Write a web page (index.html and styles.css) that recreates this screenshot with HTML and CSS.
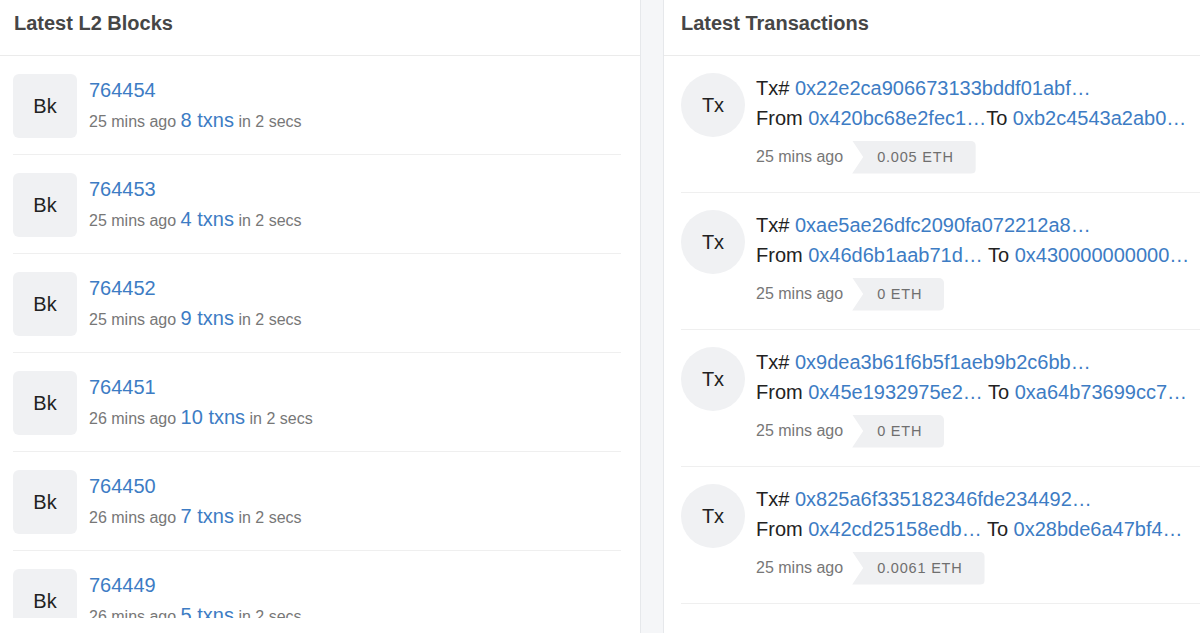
FILE: index.html
```html
<!DOCTYPE html>
<html lang="en">
<head>
    <meta charset="UTF-8">
    <meta name="viewport" content="width=device-width, initial-scale=1.0">
    <title>Explorer - Latest Blocks and Transactions</title>
    <link rel="stylesheet" href="styles.css">
</head>
<body>
    <div class="page">
        <div class="card blocks">
            <div class="card-header">Latest L2 Blocks</div>
            <div class="block-list">
                <div class="block-row">
                    <div class="block-icon">Bk</div>
                    <div class="block-info">
                        <a class="link num" href="#">764454</a>
                        <div class="meta">25 mins ago <a class="link txns" href="#">8 txns</a> in 2 secs</div>
                    </div>
                </div>
                <div class="block-row">
                    <div class="block-icon">Bk</div>
                    <div class="block-info">
                        <a class="link num" href="#">764453</a>
                        <div class="meta">25 mins ago <a class="link txns" href="#">4 txns</a> in 2 secs</div>
                    </div>
                </div>
                <div class="block-row">
                    <div class="block-icon">Bk</div>
                    <div class="block-info">
                        <a class="link num" href="#">764452</a>
                        <div class="meta">25 mins ago <a class="link txns" href="#">9 txns</a> in 2 secs</div>
                    </div>
                </div>
                <div class="block-row">
                    <div class="block-icon">Bk</div>
                    <div class="block-info">
                        <a class="link num" href="#">764451</a>
                        <div class="meta">26 mins ago <a class="link txns" href="#">10 txns</a> in 2 secs</div>
                    </div>
                </div>
                <div class="block-row">
                    <div class="block-icon">Bk</div>
                    <div class="block-info">
                        <a class="link num" href="#">764450</a>
                        <div class="meta">26 mins ago <a class="link txns" href="#">7 txns</a> in 2 secs</div>
                    </div>
                </div>
                <div class="block-row">
                    <div class="block-icon">Bk</div>
                    <div class="block-info">
                        <a class="link num" href="#">764449</a>
                        <div class="meta">26 mins ago <a class="link txns" href="#">5 txns</a> in 2 secs</div>
                    </div>
                </div>
            </div>
        </div>

        <div class="gutter"></div>

        <div class="card txs">
            <div class="card-header">Latest Transactions</div>
            <div class="tx-list">
                <div class="tx-row">
                    <div class="tx-icon">Tx</div>
                    <div class="tx-info">
                        <div class="line">Tx# <a class="link" href="#">0x22e2ca906673133bddf01abf…</a></div>
                        <div class="line">From <a class="link" href="#">0x420bc68e2fec1…</a>To <a class="link" href="#">0xb2c4543a2ab0…</a></div>
                        <div class="tx-meta">
                            <span class="age">25 mins ago</span>
                            <span class="value">0.005 ETH</span>
                        </div>
                    </div>
                </div>
                <div class="tx-row">
                    <div class="tx-icon">Tx</div>
                    <div class="tx-info">
                        <div class="line">Tx# <a class="link" href="#">0xae5ae26dfc2090fa072212a8…</a></div>
                        <div class="line">From <a class="link" href="#">0x46d6b1aab71d…</a> To <a class="link" href="#">0x430000000000…</a></div>
                        <div class="tx-meta">
                            <span class="age">25 mins ago</span>
                            <span class="value">0 ETH</span>
                        </div>
                    </div>
                </div>
                <div class="tx-row">
                    <div class="tx-icon">Tx</div>
                    <div class="tx-info">
                        <div class="line">Tx# <a class="link" href="#">0x9dea3b61f6b5f1aeb9b2c6bb…</a></div>
                        <div class="line">From <a class="link" href="#">0x45e1932975e2…</a> To <a class="link" href="#">0xa64b73699cc7…</a></div>
                        <div class="tx-meta">
                            <span class="age">25 mins ago</span>
                            <span class="value">0 ETH</span>
                        </div>
                    </div>
                </div>
                <div class="tx-row">
                    <div class="tx-icon">Tx</div>
                    <div class="tx-info">
                        <div class="line">Tx# <a class="link" href="#">0x825a6f335182346fde234492…</a></div>
                        <div class="line">From <a class="link" href="#">0x42cd25158edb…</a> To <a class="link" href="#">0x28bde6a47bf4…</a></div>
                        <div class="tx-meta">
                            <span class="age">25 mins ago</span>
                            <span class="value">0.0061 ETH</span>
                        </div>
                    </div>
                </div>
            </div>
        </div>
    </div>
</body>
</html>
```

FILE: styles.css
```css
body {
    font-family: "Liberation Sans", Arial, sans-serif;
    margin: 0;
    padding: 0;
    background: white;
    color: #222;
    overflow: hidden;
}
.page {
    display: grid;
    grid-template-columns: 641px 22px 560px;
    height: 633px;
}
.card {
    background: white;
    overflow: hidden;
}
.blocks {
    border-right: 1px solid #e6e8eb;
}
.txs {
    border-left: 1px solid #e6e8eb;
}
.gutter {
    background: #f5f6f8;
}
.card-header {
    font-size: 20px;
    font-weight: bold;
    color: #464646;
    line-height: 24px;
    padding: 11px 0 20px;
    border-bottom: 1px solid #ebebeb;
}
.blocks .card-header {
    padding-left: 14px;
}
.txs .card-header {
    padding-left: 17px;
}
.link {
    color: #3d7cc4;
    text-decoration: none;
}

/* Blocks list */
.block-list {
    height: 562px;
    overflow: hidden;
    padding: 0 19px 0 13px;
}
.block-row {
    display: flex;
    gap: 12px;
    padding: 18px 0 16px;
    border-bottom: 1px solid #efefef;
}
.block-icon {
    width: 64px;
    height: 64px;
    flex-shrink: 0;
    background: #f0f1f3;
    border-radius: 6px;
    display: flex;
    align-items: center;
    justify-content: center;
    font-size: 20px;
    color: #222;
}
.block-info {
    line-height: 30px;
    padding-top: 1px;
}
.num {
    display: block;
    font-size: 20px;
}
.meta {
    font-size: 16px;
    color: #777;
    white-space: nowrap;
}
.txns {
    font-size: 20px;
}

/* Transactions list */
.tx-list {
    padding-left: 17px;
}
.tx-row {
    display: flex;
    gap: 11px;
    padding: 17px 0 18px;
    border-bottom: 1px solid #efefef;
}
.tx-icon {
    width: 64px;
    height: 64px;
    flex-shrink: 0;
    background: #f0f1f3;
    border-radius: 50%;
    display: flex;
    align-items: center;
    justify-content: center;
    font-size: 20px;
}
.tx-info {
    white-space: nowrap;
}
.line {
    font-size: 20px;
    line-height: 30px;
}
.tx-meta {
    display: flex;
    align-items: center;
    margin-top: 7px;
    height: 34px;
}
.age {
    font-size: 16px;
    color: #777;
    margin-right: 9px;
}
.value {
    height: 33px;
    line-height: 33px;
    padding: 0 22px 0 25px;
    font-size: 14.5px;
    letter-spacing: 0.8px;
    color: #6f6f6f;
    background: #eff0f2;
    border-radius: 0 5px 5px 0;
    clip-path: polygon(0 0, 100% 0, 100% 100%, 0 100%, 11px 50%);
}
```
